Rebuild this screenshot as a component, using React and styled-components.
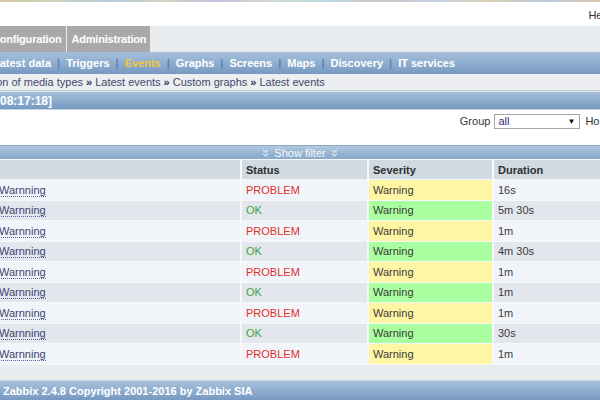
import React from 'react';
import styled, { createGlobalStyle } from 'styled-components';

const GlobalStyle = createGlobalStyle`
  html, body {
    margin: 0;
    padding: 0;
    width: 600px;
    height: 400px;
    overflow: hidden;
    background: #e9ecef;
    font-family: "Liberation Sans", Arial, sans-serif;
    font-size: 11px;
    color: #333;
  }
`;

const blueBar = `
  background: linear-gradient(to bottom, #a6c0da 0%, #8eaed0 50%, #7799c0 100%);
`;

const Page = styled.div`
  width: 600px;
  height: 400px;
  display: flex;
  flex-direction: column;
  overflow: hidden;
`;

const TopStrip = styled.div`
  height: 2px;
  background: linear-gradient(
    to right,
    #d8c9a8, #c9d6b8, #b9c8e0, #cdd6c0, #c6bfe0, #d2dccc, #b8d8e0, #d0c8c8,
    #c4d0e4, #d8d0b4, #bcc8dc, #dcc8b0
  );
`;

const TopHeader = styled.div`
  height: 24px;
  background: #fff;
  display: flex;
  justify-content: flex-end;
  align-items: center;
  padding-top: 2px;
  box-sizing: border-box;
`;

const TopLink = styled.span`
  color: #333;
  margin-right: -11px;
  font-size: 11px;
`;

const TabBar = styled.div`
  height: 26px;
  background: #e9ecef;
  display: flex;
  align-items: stretch;
  gap: 1px;
  margin-left: -13px;
`;

const Tab = styled.div`
  background: #a9a9a9;
  color: #fff;
  font-weight: bold;
  font-size: 11px;
  letter-spacing: -0.2px;
  display: flex;
  align-items: center;
  padding: 0 4px 0 5px;
`;

const Menu = styled.div`
  ${blueBar}
  height: 22px;
  display: flex;
  align-items: center;
  margin-left: -7px;
`;

const MenuItem = styled.span`
  color: ${(p) => (p.$active ? '#f6c63a' : '#fff')};
  font-weight: bold;
  font-size: 11px;
  white-space: nowrap;
`;

const MenuSep = styled.span`
  color: #5d7ea8;
  font-weight: bold;
  margin: 0 6px 0 6px;
`;

const History = styled.div`
  height: 17px;
  background: #eceef1;
  border-bottom: 1px solid #c3cad3;
  box-sizing: border-box;
  display: flex;
  align-items: center;
  color: #3f4a6b;
  white-space: nowrap;
  margin-left: -57px;
`;

const Arrow = styled.span`
  color: #2e3550;
  font-weight: bold;
  margin: 0 3px;
`;

const TitleBar = styled.div`
  ${blueBar}
  height: 18px;
  display: flex;
  align-items: center;
  color: #fff;
  font-weight: bold;
  font-size: 12px;
  border-top: 1px solid #dfe6ee;
  box-sizing: border-box;
`;

const FilterArea = styled.div`
  height: 36px;
  background: #fff;
  display: flex;
  justify-content: flex-end;
  align-items: flex-start;
  padding-top: 4px;
  box-sizing: border-box;
  gap: 4px;
  border-top: 1px solid #c6d3e0;
`;

const FieldLabel = styled.span`
  color: #333;
  line-height: 15px;
  white-space: nowrap;
`;

const SelectBox = styled.div`
  width: 77px;
  height: 13px;
  border: 1px solid #a5a5a5;
  background: #fff;
  display: flex;
  align-items: center;
  justify-content: space-between;
  padding: 0 4px 0 3px;
  color: #2c2f7a;
  font-size: 11px;
  line-height: 13px;
`;

const Caret = styled.span`
  font-size: 8px;
  color: #111;
`;

const HostLabel = styled(FieldLabel)`
  margin-right: -8px;
  margin-left: 1px;
`;

const FilterToggle = styled.div`
  background: linear-gradient(to bottom, #b3c9df 0%, #93b1d0 60%, #86a6c8 100%);
  height: 15px;
  display: flex;
  justify-content: center;
  align-items: center;
  gap: 5px;
  color: #f4f7fb;
  font-size: 11px;
  border-top: 1px solid #8aa7c6;
  box-sizing: border-box;
`;

const Table = styled.table`
  border-collapse: separate;
  border-spacing: 2px 1px;
  margin-left: -2px;
  margin-top: -1px;
  width: 640px;
  background: #f6f8fa;
  table-layout: fixed;
`;

const HeadCell = styled.th`
  background: #d1d9e1;
  height: 19px;
  padding: 0 4px;
  text-align: left;
  font-weight: bold;
  color: #2f2f2f;
  width: ${(p) => p.$w}px;
`;

const Cell = styled.td`
  height: 19.5px;
  padding: 0 4px;
  background: ${(p) => p.$bg};
  color: ${(p) => p.$color || '#3a3a3a'};
  white-space: nowrap;
  overflow: hidden;
`;

const TriggerLink = styled.span`
  color: #3d4470;
  border-bottom: 1px dotted #5b5f9a;
  margin-left: -5px;
`;

const Spacer = styled.div`
  flex: 1;
  background: #e9ecef;
`;

const Footer = styled.div`
  ${blueBar}
  height: 20px;
  display: flex;
  align-items: center;
  padding-left: 3px;
  color: #fff;
  font-weight: bold;
  font-size: 11px;
  border-top: 1px solid #c9d6e4;
  box-sizing: border-box;
`;

function DoubleChevron() {
  return (
    <svg width="7" height="8" viewBox="0 0 7 8">
      <path d="M1 1 L3.5 3.5 L6 1 M1 4.5 L3.5 7 L6 4.5" stroke="#dbe5f0" strokeWidth="1.2" fill="none" />
    </svg>
  );
}

const menuItems = ['Latest data', 'Triggers', 'Events', 'Graphs', 'Screens', 'Maps', 'Discovery', 'IT services'];
const crumbs = ['Configuration of media types', 'Latest events', 'Custom graphs', 'Latest events'];

const events = [
  { ok: false, duration: '16s' },
  { ok: true, duration: '5m 30s' },
  { ok: false, duration: '1m' },
  { ok: true, duration: '4m 30s' },
  { ok: false, duration: '1m' },
  { ok: true, duration: '1m' },
  { ok: false, duration: '1m' },
  { ok: true, duration: '30s' },
  { ok: false, duration: '1m' },
];

export default function App() {
  return (
    <>
      <GlobalStyle />
      <Page>
        <TopStrip />
        <TopHeader>
          <TopLink>Help</TopLink>
        </TopHeader>
        <TabBar>
          <Tab>Configuration</Tab>
          <Tab>Administration</Tab>
        </TabBar>
        <Menu>
          {menuItems.map((m, i) => (
            <React.Fragment key={m}>
              {i > 0 && <MenuSep>|</MenuSep>}
              <MenuItem $active={m === 'Events'}>{m}</MenuItem>
            </React.Fragment>
          ))}
        </Menu>
        <History>
          {crumbs.map((c, i) => (
            <React.Fragment key={i}>
              {i > 0 && <Arrow>»</Arrow>}
              <span>{c}</span>
            </React.Fragment>
          ))}
        </History>
        <TitleBar>08:17:18]</TitleBar>
        <FilterArea>
          <FieldLabel>Group</FieldLabel>
          <SelectBox>
            <span>all</span>
            <Caret>▼</Caret>
          </SelectBox>
          <HostLabel>Host</HostLabel>
        </FilterArea>
        <FilterToggle>
          <DoubleChevron />
          <span>Show filter</span>
          <DoubleChevron />
        </FilterToggle>
        <Table>
          <thead>
            <tr>
              <HeadCell $w={232} />
              <HeadCell $w={117}>Status</HeadCell>
              <HeadCell $w={115}>Severity</HeadCell>
              <HeadCell $w={150}>Duration</HeadCell>
            </tr>
          </thead>
          <tbody>
            {events.map((e, i) => {
              const bg = i % 2 === 0 ? '#f1f5f9' : '#e3e7ed';
              return (
                <tr key={i}>
                  <Cell $bg={bg}>
                    <TriggerLink>Warnning</TriggerLink>
                  </Cell>
                  <Cell $bg={bg} $color={e.ok ? '#3ca33c' : '#e0302a'}>
                    {e.ok ? 'OK' : 'PROBLEM'}
                  </Cell>
                  <Cell $bg={e.ok ? '#aaffa0' : '#fff6a5'}>Warning</Cell>
                  <Cell $bg={bg}>{e.duration}</Cell>
                </tr>
              );
            })}
          </tbody>
        </Table>
        <Spacer />
        <Footer>Zabbix 2.4.8 Copyright 2001-2016 by Zabbix SIA</Footer>
      </Page>
    </>
  );
}
